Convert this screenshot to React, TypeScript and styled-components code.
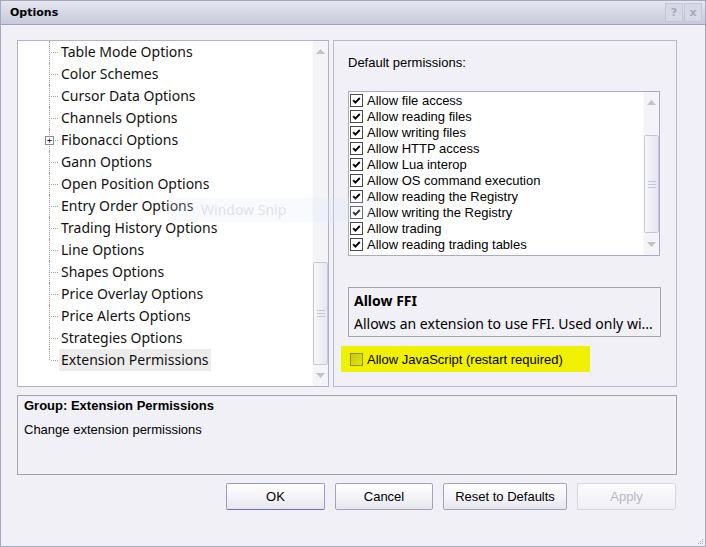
import React from 'react';
import styled, { createGlobalStyle, css } from 'styled-components';

const GlobalStyle = createGlobalStyle`
  html, body {
    margin: 0;
    padding: 0;
    background: #f0f0f6;
  }
  body {
    font-family: 'Liberation Sans', Arial, sans-serif;
    color: #000;
  }
  * {
    box-sizing: border-box;
  }
`;

const treeItems = [
  'Table Mode Options',
  'Color Schemes',
  'Cursor Data Options',
  'Channels Options',
  'Fibonacci Options',
  'Gann Options',
  'Open Position Options',
  'Entry Order Options',
  'Trading History Options',
  'Line Options',
  'Shapes Options',
  'Price Overlay Options',
  'Price Alerts Options',
  'Strategies Options',
  'Extension Permissions'
];

const permissions = [
  'Allow file access',
  'Allow reading files',
  'Allow writing files',
  'Allow HTTP access',
  'Allow Lua interop',
  'Allow OS command execution',
  'Allow reading the Registry',
  'Allow writing the Registry',
  'Allow trading',
  'Allow reading trading tables'
];

const CheckMark = () => (
  <svg width="9" height="9" viewBox="0 0 9 9">
    <polyline
      points="1.2,4.2 3.4,6.6 7.8,2"
      fill="none"
      stroke="#000"
      strokeWidth="1.9"
    />
  </svg>
);

const Arrow = ({ down }: { down?: boolean }) => (
  <svg width="9" height="5" viewBox="0 0 9 5">
    <polygon
      points={down ? '0,0 9,0 4.5,5' : '0,5 9,5 4.5,0'}
      fill="#c2c2cc"
    />
  </svg>
);

const ScrollBar = ({ thumb, gap }: { thumb: number; gap: number }) => (
  <Scroll>
    <ScrollArrow>
      <Arrow />
    </ScrollArrow>
    <ScrollTrack>
      <Thumb $height={thumb} $gap={gap}>
        <Grip />
      </Thumb>
    </ScrollTrack>
    <ScrollArrow>
      <Arrow down />
    </ScrollArrow>
  </Scroll>
);

const App = () => {
  return (
    <>
      <GlobalStyle />
      <Window>
        <TitleBar>
          <Title>Options</Title>
          <TitleButtons>
            <TitleButton>?</TitleButton>
            <TitleButton>x</TitleButton>
          </TitleButtons>
        </TitleBar>

        <Body>
          <TopRow>
            <TreePanel>
              <TreeList>
                {treeItems.map((item, i) => (
                  <TreeRow key={item}>
                    <Gutter $last={i === treeItems.length - 1}>
                      {item === 'Fibonacci Options' && <Expander>+</Expander>}
                    </Gutter>
                    <TreeLabel $selected={i === treeItems.length - 1}>
                      {item}
                    </TreeLabel>
                  </TreeRow>
                ))}
              </TreeList>
              <ScrollBar thumb={103} gap={0} />
            </TreePanel>

            <SettingsPanel>
              <FieldLabel>Default permissions:</FieldLabel>
              <CheckList>
                <CheckItems>
                  {permissions.map((p) => (
                    <CheckRow key={p}>
                      <Box>
                        <CheckMark />
                      </Box>
                      <span>{p}</span>
                    </CheckRow>
                  ))}
                </CheckItems>
                <ScrollBar thumb={98} gap={1} />
              </CheckList>

              <InfoBox>
                <InfoTitle>Allow FFI</InfoTitle>
                <InfoText>Allows an extension to use FFI. Used only wi...</InfoText>
              </InfoBox>

              <Highlight>
                <Box $marked />
                <span>Allow JavaScript (restart required)</span>
              </Highlight>
            </SettingsPanel>
          </TopRow>

          <GroupBox>
            <GroupTitle>Group: Extension Permissions</GroupTitle>
            <GroupText>Change extension permissions</GroupText>
          </GroupBox>

          <ButtonRow>
            <Button $default $width={99}>OK</Button>
            <Button $width={98}>Cancel</Button>
            <Button $width={124}>Reset to Defaults</Button>
            <Button $disabled $width={99}>Apply</Button>
          </ButtonRow>
        </Body>

        <Snip>Window Snip</Snip>
        <ResizeGrip width="8" height="8" viewBox="0 0 8 8">
          <rect x="6" y="2" width="1" height="1" fill="#a8a8b8" />
          <rect x="4" y="4" width="1" height="1" fill="#a8a8b8" />
          <rect x="6" y="4" width="1" height="1" fill="#a8a8b8" />
          <rect x="2" y="6" width="1" height="1" fill="#a8a8b8" />
          <rect x="4" y="6" width="1" height="1" fill="#a8a8b8" />
          <rect x="6" y="6" width="1" height="1" fill="#a8a8b8" />
        </ResizeGrip>
      </Window>
    </>
  );
};

const Window = styled.div`
  position: relative;
  width: 706px;
  height: 547px;
  border: 1px solid #a6a8c0;
  background: #f0f0f6;
  display: flex;
  flex-direction: column;
  overflow: hidden;
`;

const TitleBar = styled.div`
  height: 24px;
  flex: none;
  display: flex;
  align-items: center;
  justify-content: space-between;
  padding: 0 3px 0 9px;
  background: linear-gradient(#e6e7f0, #d2d4e3 60%, #c8cadc);
  border-bottom: 1px solid #9c9eba;
`;

const Title = styled.div`
  font-family: 'DejaVu Sans', Verdana, sans-serif;
  font-weight: bold;
  font-size: 11px;
  color: #000;
`;

const TitleButtons = styled.div`
  display: flex;
  gap: 1px;
`;

const TitleButton = styled.div`
  width: 18px;
  height: 19px;
  border: 1px solid #c4c6d8;
  background: #d6d8e6;
  color: #a6a8be;
  font-family: 'DejaVu Sans', Verdana, sans-serif;
  font-weight: bold;
  font-size: 11px;
  display: flex;
  align-items: center;
  justify-content: center;
`;

const Body = styled.div`
  flex: 1;
  display: flex;
  flex-direction: column;
  padding: 15px 28px 0 16px;
`;

const TopRow = styled.div`
  display: flex;
  gap: 4px;
  height: 347px;
`;

const TreePanel = styled.div`
  width: 312px;
  display: flex;
  border: 1px solid #b0b2c8;
  background: #fff;
`;

const TreeList = styled.div`
  flex: 1;
  padding-left: 31px;
`;

const TreeRow = styled.div`
  display: flex;
  height: 22px;
`;

const Gutter = styled.div<{ $last?: boolean }>`
  position: relative;
  width: 10px;
  flex: none;

  &::before {
    content: '';
    position: absolute;
    left: 0;
    top: 0;
    height: ${(p) => (p.$last ? '11px' : '22px')};
    border-left: 1px dotted #a0a0a0;
  }

  &::after {
    content: '';
    position: absolute;
    left: 2px;
    top: 11px;
    width: 7px;
    border-top: 1px dotted #a0a0a0;
  }
`;

const Expander = styled.div`
  position: absolute;
  left: -4px;
  top: 7px;
  width: 9px;
  height: 9px;
  border: 1px solid #8a8a8a;
  background: #fff;
  z-index: 1;
  font-family: 'DejaVu Sans Mono', monospace;
  font-size: 9px;
  line-height: 7px;
  text-align: center;
  color: #000;
`;

const TreeLabel = styled.div<{ $selected?: boolean }>`
  padding: 0 2px;
  line-height: 22px;
  font-family: 'Noto Sans', 'Open Sans', sans-serif;
  font-size: 14px;
  color: #111;
  white-space: nowrap;
  ${(p) =>
    p.$selected &&
    css`
      background: #ececec;
    `}
`;

const Scroll = styled.div`
  width: 16px;
  flex: none;
  display: flex;
  flex-direction: column;
  background: #f4f4f8;
  border-left: 1px solid #fbfbfd;
`;

const ScrollArrow = styled.div`
  height: 21px;
  flex: none;
  display: flex;
  align-items: center;
  justify-content: center;
`;

const ScrollTrack = styled.div`
  flex: 1;
  display: flex;
  flex-direction: column;
  justify-content: flex-end;
`;

const Thumb = styled.div<{ $height: number; $gap: number }>`
  height: ${(p) => p.$height}px;
  margin-bottom: ${(p) => p.$gap}px;
  border: 1px solid #c6c6da;
  border-radius: 2px;
  background: linear-gradient(to right, #f6f6fa, #e6e6ef);
  display: flex;
  align-items: center;
  justify-content: center;
`;

const Grip = styled.div`
  width: 8px;
  height: 7px;
  border-top: 1px solid #c4c4d4;
  border-bottom: 1px solid #c4c4d4;
  background: linear-gradient(#c4c4d4, #c4c4d4) center / 100% 1px no-repeat;
`;

const SettingsPanel = styled.div`
  width: 344px;
  border: 1px solid #b8b9cd;
  padding: 14px 0 0 14px;
  display: flex;
  flex-direction: column;
`;

const FieldLabel = styled.div`
  font-size: 13px;
  line-height: 16px;
  margin-bottom: 20px;
`;

const CheckList = styled.div`
  width: 312px;
  height: 165px;
  border: 1px solid #aaaac2;
  background: #fff;
  display: flex;
`;

const CheckItems = styled.div`
  flex: 1;
  padding-left: 1px;
`;

const CheckRow = styled.div`
  height: 16px;
  display: flex;
  align-items: center;
  gap: 4px;
  font-size: 13px;
  white-space: nowrap;
`;

const Box = styled.div<{ $marked?: boolean }>`
  width: 13px;
  height: 13px;
  flex: none;
  border: 1px solid ${(p) => (p.$marked ? '#8e8e2c' : '#4a4a4a')};
  background: ${(p) =>
    p.$marked ? 'linear-gradient(135deg, #c8c814, #e6e600)' : '#fff'};
  display: flex;
  align-items: center;
  justify-content: center;
`;

const InfoBox = styled.div`
  width: 313px;
  height: 50px;
  margin-top: 31px;
  border: 1px solid #a4a4a4;
  padding: 4px 0 0 5px;
  font-family: 'Noto Sans', 'Open Sans', sans-serif;
  font-size: 14px;
`;

const InfoTitle = styled.div`
  font-weight: bold;
  line-height: 18px;
`;

const InfoText = styled.div`
  line-height: 18px;
  margin-top: 5px;
  white-space: nowrap;
`;

const Highlight = styled.div`
  width: 249px;
  height: 26px;
  margin: 9px 0 0 -7px;
  padding-left: 9px;
  background: #f0f100;
  display: flex;
  align-items: center;
  gap: 4px;
  font-size: 13px;
`;

const GroupBox = styled.div`
  height: 80px;
  margin-top: 8px;
  border: 1px solid #a4a4a8;
  padding: 2px 0 0 6px;
  font-size: 13px;
`;

const GroupTitle = styled.div`
  font-weight: bold;
  line-height: 16px;
`;

const GroupText = styled.div`
  line-height: 16px;
  margin-top: 8px;
`;

const ButtonRow = styled.div`
  display: flex;
  justify-content: flex-end;
  gap: 10px;
  margin-top: 8px;
  padding-right: 1px;
`;

const Button = styled.div<{ $default?: boolean; $disabled?: boolean; $width: number }>`
  width: ${(p) => p.$width}px;
  height: 27px;
  display: flex;
  align-items: center;
  justify-content: center;
  font-size: 13px;
  border: 1px solid #a4a4b6;
  border-radius: 2px;
  background: linear-gradient(#ffffff, #f4f4f8 50%, #e6e6ee);
  color: #000;
  ${(p) =>
    p.$default &&
    css`
      border-color: #9a9ad0;
      border-bottom-color: #6e6ec4;
    `}
  ${(p) =>
    p.$disabled &&
    css`
      border-color: #d6d6e0;
      background: linear-gradient(#fbfbfd, #f0f0f5);
      color: #b8b8c0;
    `}
`;

const Snip = styled.div`
  position: absolute;
  left: 167px;
  top: 197px;
  width: 203px;
  height: 24px;
  padding-left: 33px;
  background: rgba(222, 232, 250, 0.22);
  color: rgba(190, 190, 206, 0.45);
  font-family: 'Noto Sans', 'Open Sans', sans-serif;
  font-size: 14px;
  line-height: 24px;
  pointer-events: none;
`;

const ResizeGrip = styled.svg`
  position: absolute;
  right: 1px;
  bottom: 1px;
`;

export default App;
